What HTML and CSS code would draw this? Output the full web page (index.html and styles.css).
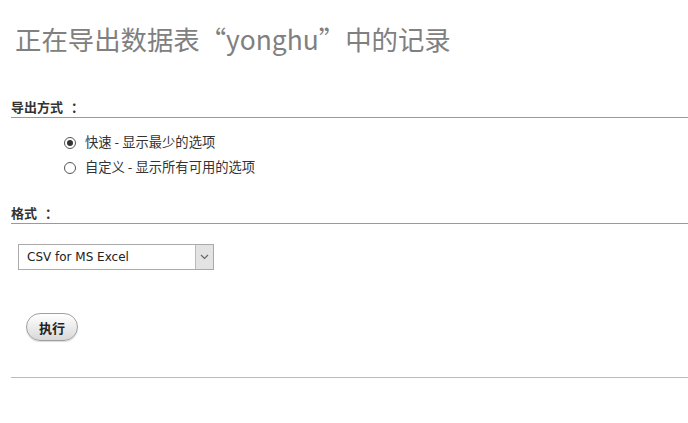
FILE: index.html
```html
<!DOCTYPE html>
<html lang="zh-CN">
<head>
    <meta charset="UTF-8">
    <title>导出</title>
    <link rel="stylesheet" href="styles.css">
</head>
<body>
    <div id="page">
        <h2 class="title">正在导出数据表“yonghu”中的记录</h2>

        <div class="section">
            <h3 class="section-head">导出方式<span class="colon">：</span></h3>
            <ul class="options">
                <li><label><input type="radio" name="method" checked> 快速 - 显示最少的选项</label></li>
                <li><label><input type="radio" name="method"> 自定义 - 显示所有可用的选项</label></li>
            </ul>
        </div>

        <div class="section second">
            <h3 class="section-head">格式<span class="colon">：</span></h3>
            <div class="select-box">
                <span class="select-value">CSV for MS Excel</span>
                <span class="select-arrow">
                    <svg width="9" height="6" viewBox="0 0 9 6"><path d="M1 1 L4.5 4.5 L8 1" fill="none" stroke="#666" stroke-width="1.2"/></svg>
                </span>
            </div>
        </div>

        <div class="actions">
            <button class="btn">执行</button>
        </div>

        <hr class="bottom-line">
    </div>
</body>
</html>
```

FILE: styles.css
```css
body {
    margin: 0;
    background: #fff;
    font-family: "Noto Sans CJK SC", "Noto Sans", sans-serif;
    color: #333;
}

#page {
    padding-left: 11px;
}

.title {
    margin: 0;
    padding: 20px 0 0 4px;
    font-size: 26.4px;
    font-weight: normal;
    line-height: 38px;
    color: #808080;
}

.section {
    margin-top: 39px;
}

.section.second {
    margin-top: 24px;
}

.section-head {
    margin: 0;
    font-family: "Noto Sans CJK TC", sans-serif;
    font-size: 13px;
    font-weight: bold;
    line-height: 20px;
    color: #333;
    border-bottom: 1px solid #9a9a9a;
}

.section-head .colon {
    margin-left: 8px;
}

.options {
    list-style: none;
    margin: 0;
    padding: 11px 0 0 52px;
}

.options li {
    font-size: 13.3px;
    line-height: 25px;
    color: #333;
}

.options input {
    appearance: none;
    -webkit-appearance: none;
    margin: 0 6px 0 1px;
    width: 12px;
    height: 12px;
    border: 1px solid #555;
    border-radius: 50%;
    background: #fff;
    vertical-align: -2px;
    position: relative;
}

.options input:checked::after {
    content: "";
    position: absolute;
    left: 2px;
    top: 2px;
    width: 6px;
    height: 6px;
    border-radius: 50%;
    background: #333;
}

.select-box {
    display: flex;
    width: 194px;
    height: 24px;
    margin: 20px 0 0 7px;
    border: 1px solid #aaa;
    font-family: "DejaVu Sans", sans-serif;
    font-size: 12px;
    color: #222;
}

.select-value {
    flex: 1;
    display: flex;
    align-items: center;
    padding-left: 8px;
}

.select-arrow {
    width: 17px;
    display: flex;
    align-items: center;
    justify-content: center;
    background: #e3e3e3;
    border-left: 1px solid #bbb;
}

.actions {
    display: flex;
    padding: 43px 0 0 15px;
}

.btn {
    width: 52px;
    height: 28px;
    border: 1px solid #a0a0a0;
    border-radius: 14px;
    background: linear-gradient(#ffffff, #d8d8d8);
    font-family: "Noto Sans CJK SC", sans-serif;
    font-size: 13px;
    font-weight: bold;
    color: #222;
    padding: 0;
    cursor: pointer;
    box-shadow: 0 1px 1px rgba(0, 0, 0, 0.15);
}

.bottom-line {
    margin: 36px 0 0 0;
    border: none;
    border-top: 1px solid #bbb;
    height: 0;
}
```
